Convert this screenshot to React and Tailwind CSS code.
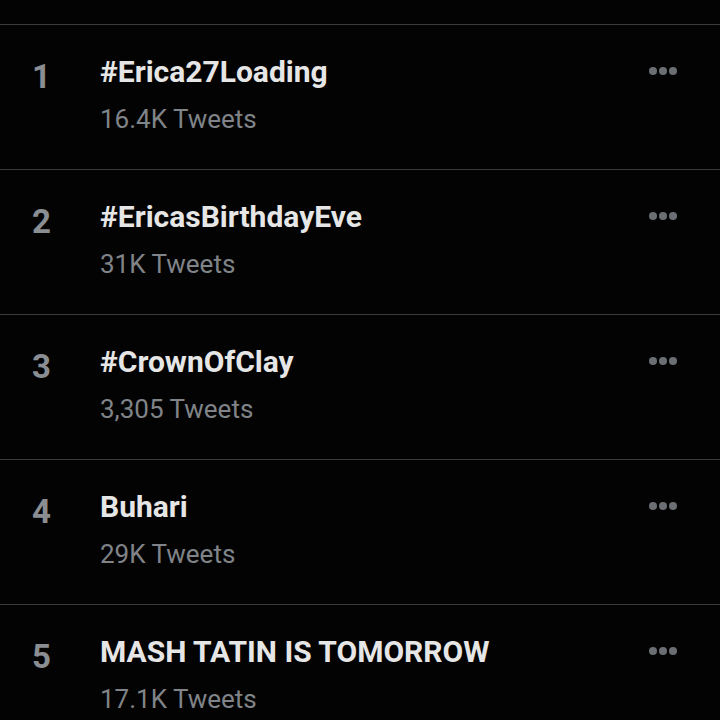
const trends = [
  { rank: 1, name: "#Erica27Loading", count: "16.4K Tweets" },
  { rank: 2, name: "#EricasBirthdayEve", count: "31K Tweets" },
  { rank: 3, name: "#CrownOfClay", count: "3,305 Tweets" },
  { rank: 4, name: "Buhari", count: "29K Tweets" },
  { rank: 5, name: "MASH TATIN IS TOMORROW", count: "17.1K Tweets" },
];

function MoreDots() {
  return (
    <div className="self-start flex items-center gap-[2px] pt-[13px]">
      <span className="w-[8px] h-[8px] rounded-full bg-[#6b6f73]" />
      <span className="w-[8px] h-[8px] rounded-full bg-[#6b6f73]" />
      <span className="w-[8px] h-[8px] rounded-full bg-[#6b6f73]" />
    </div>
  );
}

function TrendRow({ rank, name, count }) {
  return (
    <div className="flex items-start h-[145px] border-t border-[#3b3b3b] pl-[32px] pr-[43px] pt-[29px]">
      <div className="w-[68px] text-[33px] leading-[36px] font-bold text-[#8a8e92] pt-[5px]">
        {rank}
      </div>
      <div className="flex-1 flex flex-col">
        <div className="text-[30px] leading-[36px] font-bold text-[#e6e6e6]">
          {name}
        </div>
        <div className="mt-[14px] text-[26px] leading-[30px] text-[#808488]">
          {count}
        </div>
      </div>
      <MoreDots />
    </div>
  );
}

export default function App() {
  return (
    <div
      className="w-[720px] h-[720px] overflow-hidden bg-[#030303]"
      style={{ fontFamily: "Roboto, 'Liberation Sans', sans-serif" }}
    >
      <div className="h-[24px]" />
      {trends.map((t) => (
        <TrendRow key={t.rank} {...t} />
      ))}
    </div>
  );
}
